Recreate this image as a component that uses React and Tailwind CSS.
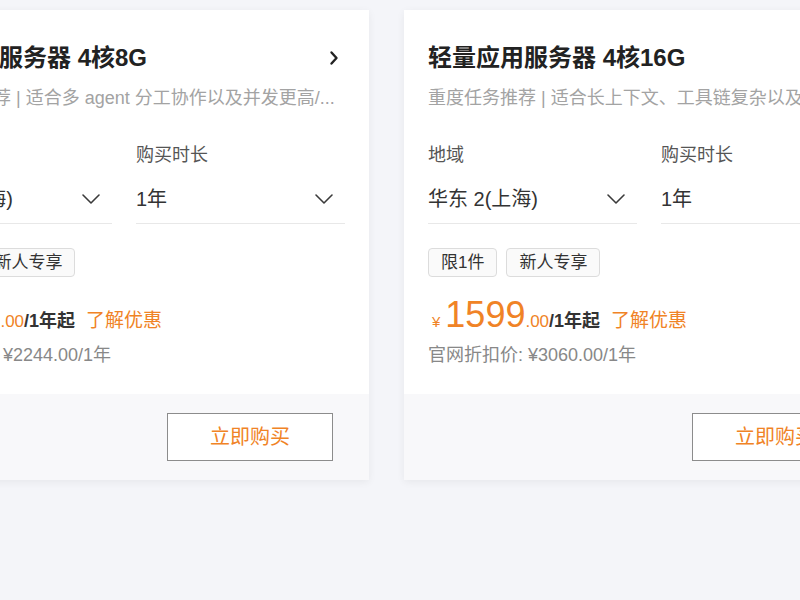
import React from "react";

const FONT = { fontFamily: '"Liberation Sans", "Noto Sans CJK SC", sans-serif' };

function ChevronDown() {
  return (
    <svg width="20" height="12" viewBox="0 0 20 12" fill="none">
      <path d="M2 2 L10 10 L18 2" stroke="#3a3a3a" strokeWidth="1.6" strokeLinecap="round" strokeLinejoin="round" />
    </svg>
  );
}

function ChevronRight() {
  return (
    <svg width="10" height="16" viewBox="0 0 10 16" fill="none">
      <path d="M2.5 2.5 L7.5 8 L2.5 13.5" stroke="#222" strokeWidth="2.4" strokeLinecap="round" strokeLinejoin="round" />
    </svg>
  );
}

function Select({ label, value }) {
  return (
    <div className="flex flex-col">
      <div className="text-[18px] leading-[24px] text-[#555]">{label}</div>
      <div className="mt-2 flex h-[49px] items-center justify-between border-b border-[#e8e8e8] pr-[11px]">
        <span className="text-[20px] text-[#333]">{value}</span>
        <ChevronDown />
      </div>
    </div>
  );
}

function Card({ title, subtitle, region, tags, price, origPrice }) {
  return (
    <div className="flex w-[490px] shrink-0 flex-col overflow-hidden bg-white shadow-[0_2px_8px_rgba(0,0,0,0.06)]">
      <div className="flex flex-col px-6 pt-8 pb-[27px]">
        <div className="flex h-8 items-center justify-between">
          <span className="text-[24px] font-semibold leading-8 text-[#222]">{title}</span>
          <span className="mr-[6px] flex items-center">
            <ChevronRight />
          </span>
        </div>
        <div className="mt-3 overflow-hidden whitespace-nowrap text-[18px] leading-6 text-[#a3a3a3]">{subtitle}</div>
        <div className="mt-[33px] grid grid-cols-2 gap-6">
          <Select label="地域" value={region} />
          <Select label="购买时长" value="1年" />
        </div>
        <div className="mt-6 flex gap-[9px]">
          {tags.map((t) => (
            <span
              key={t}
              className="flex h-[29px] items-center rounded-[4px] border border-[#dcdcdc] bg-[#fafafa] px-3 text-[17px] text-[#333]"
            >
              {t}
            </span>
          ))}
        </div>
        <div className="mt-[18px] flex h-10 items-baseline">
          <span className="ml-[4px] text-[15px] text-[#f08326]">¥</span>
          <span className="ml-[5px] text-[36px] leading-10 text-[#f08326]">{price}</span>
          <span className="text-[17px] text-[#f08326]">.00</span>
          <span className="text-[18px] font-semibold text-[#333]">/1年起</span>
          <span className="ml-[11px] text-[19px] text-[#f08326]">了解优惠</span>
        </div>
        <div className="mt-[8px] text-[18px] leading-6 text-[#888]">官网折扣价: ¥{origPrice}.00/1年</div>
      </div>
      <div className="flex h-[86px] items-center justify-end bg-[#f8f8fa] pr-[36px]">
        <button className="flex h-[48px] w-[166px] items-center justify-center border-[1.5px] border-[#8c8c8c] bg-white text-[20px] text-[#f08326]">
          立即购买
        </button>
      </div>
    </div>
  );
}

export default function App() {
  return (
    <div className="h-[600px] w-[800px] overflow-hidden bg-[#f4f5f9]" style={FONT}>
      <div className="-ml-[121px] flex gap-[35px] pt-[10px]">
        <Card
          title="轻量应用服务器 4核8G"
          subtitle="进阶任务推荐 | 适合多 agent 分工协作以及并发更高/..."
          region="华东 2(上海)"
          tags={["限1件", "新人专享"]}
          price="1299"
          origPrice="2244"
        />
        <Card
          title="轻量应用服务器 4核16G"
          subtitle="重度任务推荐 | 适合长上下文、工具链复杂以及高并发的复杂任务场景"
          region="华东 2(上海)"
          tags={["限1件", "新人专享"]}
          price="1599"
          origPrice="3060"
        />
      </div>
    </div>
  );
}
